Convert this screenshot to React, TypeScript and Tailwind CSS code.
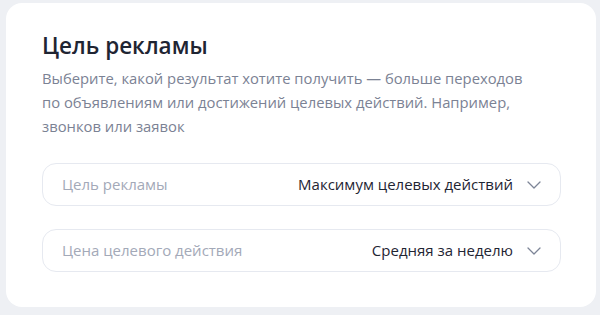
import { ChevronDown } from 'lucide-react';

const FONT = { fontFamily: '"Open Sans", "Noto Sans", sans-serif' };

function Field({ label, value }: { label: string; value: string }) {
  return (
    <div className="flex h-[43px] items-center justify-between rounded-[14px] border border-[#e6e9f0] pl-[19px] pr-[14px]">
      <span className="text-[15px] text-[#a3a9b8]">{label}</span>
      <div className="flex items-center gap-[9px]">
        <span className="text-[15px] text-[#1f2533]">{value}</span>
        <ChevronDown className="h-[24px] w-[24px] text-[#7d8597]" strokeWidth={1.3} />
      </div>
    </div>
  );
}

export default function App() {
  return (
    <div className="h-[315px] w-[600px] bg-[#eef0f4] pl-[6px] pr-[4px] pt-[3px]" style={FONT}>
      <div className="h-[304px] rounded-[16px] bg-white pl-[36px] pr-[35px] pt-[28px]">
        <h1 className="text-[22.5px] font-semibold leading-[30px] text-[#1f2533]">Цель рекламы</h1>
        <p className="mt-[5px] text-[14.8px] leading-[24px] text-[#7b8294]">
          Выберите, какой результат хотите получить — больше переходов
          <br />
          по объявлениям или достижений целевых действий. Например,
          <br />
          звонков или заявок
        </p>
        <div className="mt-[25px] flex flex-col gap-[23px]">
          <Field label="Цель рекламы" value="Максимум целевых действий" />
          <Field label="Цена целевого действия" value="Средняя за неделю" />
        </div>
      </div>
    </div>
  );
}
